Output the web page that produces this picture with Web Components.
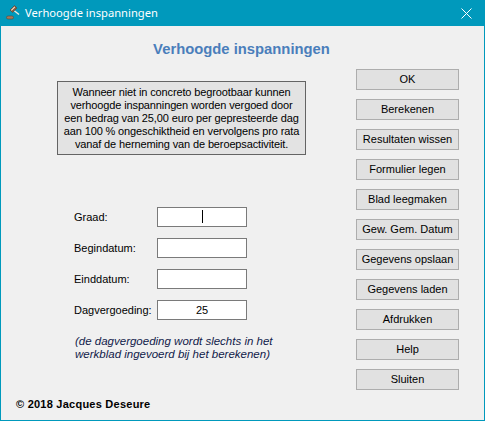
<!DOCTYPE html>
<html>
<head>
<meta charset="utf-8">
<style>
  html, body { margin: 0; padding: 0; background: #f0f0f0; }
  body { width: 485px; height: 421px; overflow: hidden; }
</style>
</head>
<body>
<app-window caption="Verhoogde inspanningen">
  <page-heading>Verhoogde inspanningen</page-heading>
  <info-box>Wanneer niet in concreto begrootbaar kunnen<br>verhoogde inspanningen worden vergoed door<br>een bedrag van 25,00 euro per gepresteerde dag<br>aan 100 % ongeschiktheid en vervolgens pro rata<br>vanaf de herneming van de beroepsactiviteit.</info-box>
  <form-row label="Graad:" caret></form-row>
  <form-row label="Begindatum:"></form-row>
  <form-row label="Einddatum:"></form-row>
  <form-row label="Dagvergoeding:" value="25"></form-row>
  <form-note>(de dagvergoeding wordt slechts in het<br>werkblad ingevoerd bij het berekenen)</form-note>
  <copy-line>© 2018 Jacques Deseure</copy-line>

  <win-button slot="buttons">OK</win-button>
  <win-button slot="buttons">Berekenen</win-button>
  <win-button slot="buttons">Resultaten wissen</win-button>
  <win-button slot="buttons">Formulier legen</win-button>
  <win-button slot="buttons">Blad leegmaken</win-button>
  <win-button slot="buttons">Gew. Gem. Datum</win-button>
  <win-button slot="buttons">Gegevens opslaan</win-button>
  <win-button slot="buttons">Gegevens laden</win-button>
  <win-button slot="buttons">Afdrukken</win-button>
  <win-button slot="buttons">Help</win-button>
  <win-button slot="buttons">Sluiten</win-button>
</app-window>

<script>
const FONT = '"Liberation Sans", Arial, sans-serif';

class AppWindow extends HTMLElement {
  constructor() {
    super();
    this.attachShadow({ mode: "open" });
    this.shadowRoot.innerHTML = `
      <style>
        :host {
          display: flex;
          flex-direction: column;
          box-sizing: border-box;
          width: 485px;
          height: 421px;
          border: 1px solid #0099bc;
          border-top: 0;
          background: #f0f0f0;
          font-family: ${FONT};
          color: #000;
        }
        .bar {
          display: flex;
          align-items: center;
          height: 26px;
          background: #0099bc;
          color: #fff;
          font-family: "Noto Sans", ${FONT};
          font-size: 11.2px;
          flex: none;
        }
        .bar svg.app { margin: 0 4px 0 4px; flex: none; }
        .bar span { flex: 1; position: relative; top: -1px; }
        .bar svg.close { margin-right: 12px; flex: none; }
        .body { display: flex; flex: 1; min-height: 0; }
        .left { flex: none; width: 355px; display: flex; flex-direction: column; }
        .right {
          flex: none;
          width: 103px;
          padding-top: 43px;
          display: flex;
          flex-direction: column;
          gap: 9px;
        }
      </style>
      <div class="bar">
        <svg class="app" width="16" height="16" viewBox="0 0 16 16">
          <path d="M9 5.5 L14 9.5" stroke="#f1e7da" stroke-width="1.5" fill="none"/>
          <path d="M9.5 .5 L12 3 L7.5 7.5 L5 5 Z" fill="#8a5a3c" stroke="#5a3c2a" stroke-width=".5"/>
          <path d="M9.8 1.8 L6.3 5.3" stroke="#f3e3d0" stroke-width="1.1" fill="none"/>
          <rect x="1.5" y="11" width="7" height="3" rx="1.5" fill="#a27a5e" stroke="#5a3c2a" stroke-width=".5"/>
        </svg>
        <span></span>
        <svg class="close" width="11" height="11" viewBox="0 0 11 11">
          <path d="M.5 .5 L10.5 10.5 M10.5 .5 L.5 10.5" stroke="#fff" stroke-width="1" fill="none"/>
        </svg>
      </div>
      <div class="body">
        <div class="left"><slot></slot></div>
        <div class="right"><slot name="buttons"></slot></div>
      </div>
    `;
    this.shadowRoot.querySelector(".bar span").textContent = this.getAttribute("caption");
  }
}

class PageHeading extends HTMLElement {
  constructor() {
    super();
    this.attachShadow({ mode: "open" });
    this.shadowRoot.innerHTML = `
      <style>
        :host {
          display: block;
          margin: 14px 0 0 0;
          height: 18px;
          line-height: 18px;
          font-size: 14.8px;
          font-weight: bold;
          color: #4a7ebb;
          text-align: center;
          padding-left: 127px;
          width: 227px;
          white-space: nowrap;
        }
      </style>
      <slot></slot>
    `;
  }
}

class InfoBox extends HTMLElement {
  constructor() {
    super();
    this.attachShadow({ mode: "open" });
    this.shadowRoot.innerHTML = `
      <style>
        :host {
          display: block;
          box-sizing: border-box;
          width: 249px;
          height: 74px;
          margin: 23px 0 51px 56px;
          padding-top: 4px;
          border: 1px solid #646464;
          background: #e3e3e3;
          font-size: 11px;
          letter-spacing: -.13px;
          line-height: 13px;
          text-align: center;
          white-space: nowrap;
        }
      </style>
      <slot></slot>
    `;
  }
}

class FormRow extends HTMLElement {
  constructor() {
    super();
    this.attachShadow({ mode: "open" });
    this.shadowRoot.innerHTML = `
      <style>
        :host {
          display: flex;
          align-items: center;
          height: 21px;
          margin: 0 0 10px 73px;
          font-size: 11px;
        }
        .label { width: 83px; flex: none; }
        .field {
          box-sizing: border-box;
          width: 90px;
          height: 20px;
          display: flex;
          align-items: center;
          justify-content: center;
          border: 1px solid #7a7a7a;
          background: #fff;
        }
        .caret { width: 1px; height: 13px; background: #000; }
      </style>
      <div class="label"></div>
      <div class="field"></div>
    `;
    this.shadowRoot.querySelector(".label").textContent = this.getAttribute("label");
    const field = this.shadowRoot.querySelector(".field");
    if (this.hasAttribute("caret")) {
      const c = document.createElement("div");
      c.className = "caret";
      field.appendChild(c);
    } else if (this.hasAttribute("value")) {
      field.textContent = this.getAttribute("value");
    }
  }
}

class FormNote extends HTMLElement {
  constructor() {
    super();
    this.attachShadow({ mode: "open" });
    this.shadowRoot.innerHTML = `
      <style>
        :host {
          display: block;
          margin: 5px 0 0 74px;
          font-size: 11.5px;
          line-height: 13px;
          font-style: italic;
          color: #10204a;
          white-space: nowrap;
        }
      </style>
      <slot></slot>
    `;
  }
}

class CopyLine extends HTMLElement {
  constructor() {
    super();
    this.attachShadow({ mode: "open" });
    this.shadowRoot.innerHTML = `
      <style>
        :host {
          display: block;
          margin: 37px 0 0 15px;
          font-size: 11px;
          line-height: 13px;
          font-weight: bold;
          letter-spacing: .24px;
          white-space: nowrap;
        }
      </style>
      <slot></slot>
    `;
  }
}

class WinButton extends HTMLElement {
  constructor() {
    super();
    this.attachShadow({ mode: "open" });
    this.shadowRoot.innerHTML = `
      <style>
        :host {
          display: flex;
          align-items: center;
          justify-content: center;
          box-sizing: border-box;
          width: 103px;
          height: 21px;
          padding-bottom: 1px;
          border: 1px solid #adadad;
          background: #e1e1e1;
          font-size: 11px;
          white-space: nowrap;
        }
      </style>
      <slot></slot>
    `;
  }
}

customElements.define("app-window", AppWindow);
customElements.define("page-heading", PageHeading);
customElements.define("info-box", InfoBox);
customElements.define("form-row", FormRow);
customElements.define("form-note", FormNote);
customElements.define("copy-line", CopyLine);
customElements.define("win-button", WinButton);
</script>
</body>
</html>
